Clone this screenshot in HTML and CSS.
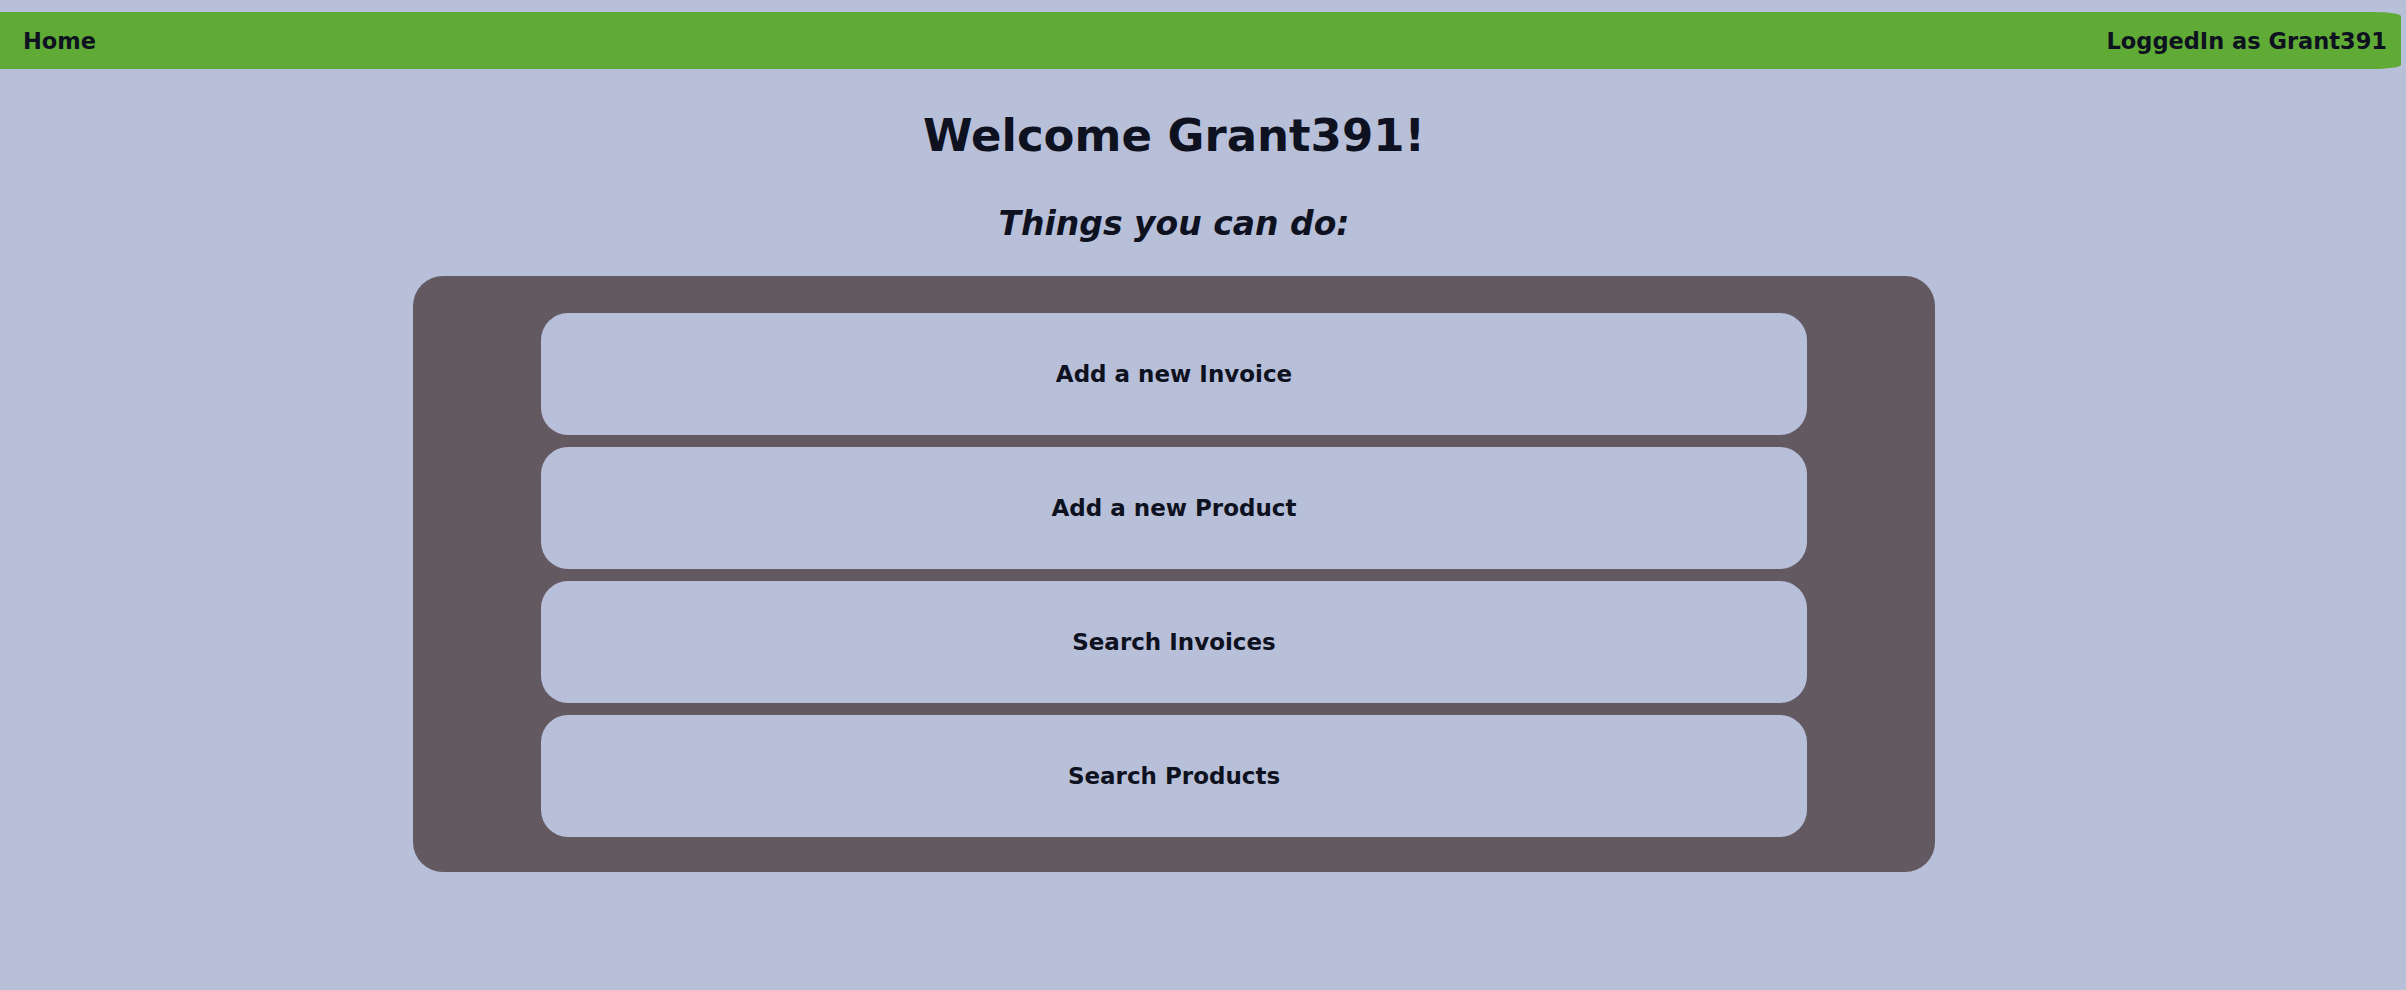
FILE: index.html
```html
<!DOCTYPE html>
<html lang="en">
<head>
<meta charset="utf-8">
<title>Home</title>
<link rel="stylesheet" href="styles.css">
</head>
<body>
<nav class="topbar">
  <a class="topbar-link" href="#">Home</a>
  <span class="topbar-user">LoggedIn as Grant391</span>
</nav>
<main class="page">
  <h1 class="welcome">Welcome Grant391!</h1>
  <h2 class="subtitle">Things you can do:</h2>
  <section class="actions">
    <a class="action" href="#">Add a new Invoice</a>
    <a class="action" href="#">Add a new Product</a>
    <a class="action" href="#">Search Invoices</a>
    <a class="action" href="#">Search Products</a>
  </section>
</main>
</body>
</html>
```
FILE: styles.css
```css
html, body {
  margin: 0;
  padding: 0;
  background: #b8bfd9;
  color: #0e1120;
  font-family: "DejaVu Sans", Verdana, sans-serif;
}

.topbar {
  margin-top: 12px;
  width: 2401px;
  height: 57px;
  box-sizing: border-box;
  padding: 0 14px 0 23px;
  background: #60aa36;
  display: flex;
  align-items: center;
  justify-content: space-between;
  border-radius: 0 30px 30px 0 / 0 4px 4px 0;
  font-size: 22.5px;
  font-weight: bold;
}

.topbar-link {
  color: #0e1120;
  text-decoration: none;
}

.topbar-user {
  color: #0e1120;
}

.page {
  width: 2348px;
  display: flex;
  flex-direction: column;
  align-items: center;
}

.welcome {
  margin: 40px 0 0;
  font-size: 45px;
  line-height: 54px;
  font-weight: bold;
}

.subtitle {
  margin: 41px 0 0;
  font-size: 33px;
  line-height: 40px;
  font-weight: bold;
  font-style: italic;
}

.actions {
  margin-top: 32px;
  width: 1522px;
  box-sizing: border-box;
  padding: 37px 128px 35px;
  background: #635960;
  border-radius: 30px;
  display: flex;
  flex-direction: column;
  gap: 12px;
}

.action {
  height: 122px;
  display: flex;
  align-items: center;
  justify-content: center;
  background: #b8bfd9;
  border-radius: 27px;
  color: #0e1120;
  text-decoration: none;
  font-size: 23px;
  font-weight: bold;
}
```
